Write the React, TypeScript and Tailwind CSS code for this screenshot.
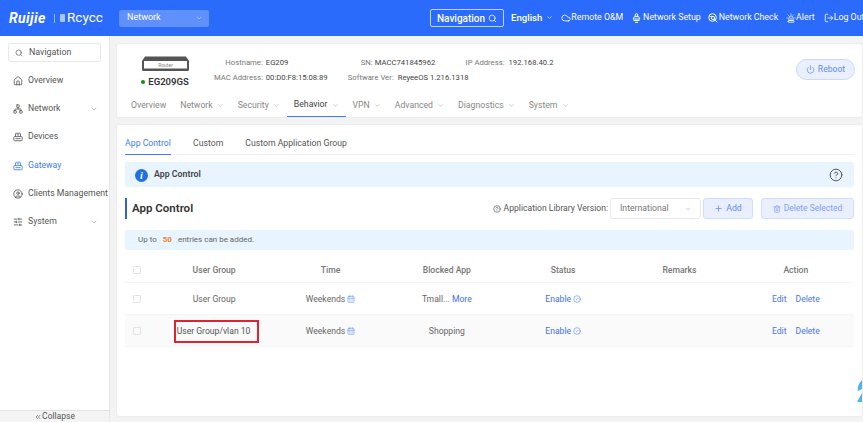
import { ChevronDown, ChevronsLeft, Search, Home, Network, CircleUser, SlidersHorizontal, Cloud, Power, Plus, Trash2, CalendarDays, CircleCheck, CircleHelp, LogOut, Siren } from 'lucide-react';

const font = "font-['Roboto','Liberation_Sans',sans-serif]";

function DeviceIcon({ size = 10, className = '' }: { size?: number; className?: string }) {
  return (
    <svg width={size} height={size} viewBox="0 0 12 12" fill="none" stroke="currentColor" strokeWidth="1" className={className}>
      <path d="M3 5.5V2.5a1 1 0 0 1 1-1h4a1 1 0 0 1 1 1v3" />
      <rect x="1" y="5.5" width="10" height="5" rx="1" />
      <path d="M3 8h6M4.5 3.5h3" />
    </svg>
  );
}

function SetupIcon() {
  return (
    <svg width="9" height="10" viewBox="0 0 9 10" fill="none" stroke="currentColor" strokeWidth="1" className="ml-[9px] mr-[2px] shrink-0">
      <circle cx="4.5" cy="2" r="1.3" />
      <path d="M2.5 3.6h4L8 6H1zM1.5 7.5h6M3 9.3h3" />
    </svg>
  );
}

function CheckIcon() {
  return (
    <svg width="10" height="10" viewBox="0 0 10 10" fill="none" stroke="currentColor" strokeWidth="1" className="ml-[7px] mr-px shrink-0">
      <circle cx="4.5" cy="4.5" r="3.8" />
      <circle cx="5" cy="5" r="1.6" />
      <path d="M6.2 6.2L9.3 9.3M1.5 4c1-.8 2-.8 3-.2" />
    </svg>
  );
}

const sideItems = [
  { label: 'Overview', icon: Home, y: 'h-[28px]' },
  { label: 'Network', icon: Network, arrow: true, y: 'h-[28px]' },
  { label: 'Devices', icon: DeviceIcon, y: 'h-[28px]' },
  { label: 'Gateway', icon: DeviceIcon, active: true, y: 'h-[29px]' },
  { label: 'Clients Management', icon: CircleUser, y: 'h-[28px]' },
  { label: 'System', icon: SlidersHorizontal, arrow: true, y: 'h-[28px]' },
];

const rows = [
  { group: 'User Group', app: 'Tmall...', more: true, bg: 'bg-white' },
  { group: 'User Group/vlan 10', app: 'Shopping', boxed: true, bg: 'bg-[#fafafa]' },
];

function Sidebar() {
  return (
    <aside className="w-[110px] shrink-0 flex flex-col bg-white border-r border-[#e6e6e6]">
      <div className="mx-2 mt-[7px] mb-[5px] h-[19px] flex items-center gap-[6px] px-[6px] border border-[#e8e8e8] rounded-[3px] text-[#555] text-[8.9px]">
        <Search size={8} />
        Navigation
      </div>
      {sideItems.map((it) => (
        <div key={it.label} className={`${it.y} flex items-center pl-[13px] pr-[11px] gap-[5px] text-[8.7px] whitespace-nowrap ${it.active ? 'text-[#3f7cf6]' : 'text-[#555]'}`}>
          <it.icon size={10} className="shrink-0" />
          <span className="flex-1">{it.label}</span>
          {it.arrow && <ChevronDown size={8} className="text-[#aaa]" />}
        </div>
      ))}
      <div className="mt-auto h-[12px] bg-[#f4f4f4] border-t border-[#e3e3e3] flex items-center justify-center text-[8.5px] text-[#555] leading-none">
        <ChevronsLeft size={8} />
        Collapse
      </div>
    </aside>
  );
}

function Header() {
  return (
    <header className="h-[36px] shrink-0 bg-[#2b6bfb] flex items-center text-white overflow-hidden">
      <div className="w-[119px] shrink-0 flex items-center pl-[9px] whitespace-nowrap">
        <span className="w-[41px] italic font-bold text-[14px] tracking-[0.4px] leading-none">Ruijie</span>
        <span className="mx-[4px] w-px h-[9px] bg-white/50" />
        <span className="ml-[1px] w-[5px] h-[8px] bg-white/60 rounded-[1px] mr-[2px]" />
        <span className="text-[13.5px] leading-none">Rcycc</span>
      </div>
      <div className="w-[90px] shrink-0 h-[17px] rounded-[2px] bg-white/25 flex items-center justify-between pl-[8px] pr-[6px] text-[9px]">
        Network
        <ChevronDown size={8} className="text-white/60" />
      </div>
      <div className="ml-[221px] w-[74px] shrink-0 h-[18px] border border-white/70 rounded-[2px] flex items-center justify-between px-[6px] text-[10px] font-medium">
        Navigation
        <Search size={9} />
      </div>
      <div className="ml-[7px] shrink-0 flex items-center text-[9.6px] font-medium">
        English
        <ChevronDown size={7} className="ml-[4px]" />
      </div>
      <div className="ml-[8px] flex items-center text-[8.8px] whitespace-nowrap">
        <Cloud size={10} className="shrink-0" />
        Remote O&amp;M
        <SetupIcon />
        Network Setup
        <CheckIcon />
        Network Check
        <Siren size={10} className="ml-[8px] shrink-0" />
        Alert
        <LogOut size={10} className="ml-[9px] shrink-0" />
        Log Out
      </div>
    </header>
  );
}

function DeviceCard() {
  const tabs = [
    { label: 'Overview', w: 'ml-[14px]' },
    { label: 'Network', w: 'ml-[14px]', arrow: true },
    { label: 'Security', w: 'ml-[14px]', arrow: true },
    { label: 'Behavior', w: 'ml-[7px] px-[7px] border-b border-[#3f7cf6] text-[#444]', arrow: true },
    { label: 'VPN', w: 'ml-[7px]', arrow: true },
    { label: 'Advanced', w: 'ml-[14px]', arrow: true },
    { label: 'Diagnostics', w: 'ml-[14px]', arrow: true },
    { label: 'System', w: 'ml-[14px]', arrow: true },
  ];
  return (
    <section className="h-[75px] bg-white rounded-[3px] border border-[#ececec] flex flex-col">
      <div className="h-[50px] flex items-start">
        <div className="ml-[24px] mt-[12px] w-[48px] flex flex-col items-center">
          <svg width="47" height="15" viewBox="0 0 47 15">
            <path d="M3 0.5H44L47 5V13.5a1.5 1.5 0 0 1-1.5 1.5H1.5A1.5 1.5 0 0 1 0 13.5V5Z" fill="#555" />
            <rect x="2" y="5" width="43" height="7.5" fill="#fff" />
            <text x="23.5" y="11" textAnchor="middle" fontSize="5" fill="#888">Router</text>
          </svg>
          <div className="mt-[4px] flex items-center gap-[3px] text-[9.5px] font-semibold text-[#333] whitespace-nowrap">
            <span className="w-[4px] h-[4px] rounded-full bg-[#178a17]" />
            EG209GS
          </div>
        </div>
        <div className="ml-[25px] mt-[13px] flex flex-col gap-[4px] text-[7.7px] leading-[11px] whitespace-nowrap items-end">
          <div className="flex gap-[3px]"><span className="text-[#777]">Hostname:</span><span className="w-[61px] text-[#444]">EG209</span></div>
          <div className="flex gap-[3px]"><span className="text-[#777]">MAC Address:</span><span className="w-[61px] text-[#444]">00:D0:F8:15:08:89</span></div>
        </div>
        <div className="ml-[21px] mt-[13px] flex flex-col gap-[4px] text-[7.7px] leading-[11px] whitespace-nowrap">
          <div className="ml-[13px] flex gap-[2px]"><span className="text-[#777]">SN:</span><span className="text-[#444]">MACC741845962</span></div>
          <div className="flex gap-[4px]"><span className="text-[#777]">Software Ver:</span><span className="text-[#444]">ReyeeOS 1.216.1318</span></div>
        </div>
        <div className="ml-[-3px] mt-[13px] flex gap-[4px] text-[7.7px] leading-[11px] whitespace-nowrap">
          <span className="text-[#777]">IP Address:</span><span className="text-[#444]">192.168.40.2</span>
        </div>
        <button className="ml-auto mr-[7px] mt-[15px] w-[59px] h-[21px] rounded-full border border-[#c9d8fc] bg-[#eaf0fe] text-[#5f8bf5] text-[8.6px] flex items-center justify-center gap-[3px]">
          <Power size={9} />
          Reboot
        </button>
      </div>
      <nav className="flex-1 flex items-stretch text-[8.7px] text-[#888] whitespace-nowrap">
        {tabs.map((t) => (
          <div key={t.label} className={`${t.w} flex items-center gap-[4px]`}>
            {t.label}
            {t.arrow && <ChevronDown size={7} className="text-[#aaa]" />}
          </div>
        ))}
      </nav>
    </section>
  );
}

function RuleTable() {
  return (
    <div className="text-[8.6px] text-[#666]">
      <div className="h-[25px] grid grid-cols-[31px_repeat(6,1fr)] items-center text-center font-medium text-[#777] border-b border-[#f5f5f5]">
        <span className="w-[8px] h-[8px] ml-[8px] border border-[#e3e3e3] rounded-[1px]" />
        <span>User Group</span>
        <span>Time</span>
        <span>Blocked App</span>
        <span>Status</span>
        <span>Remarks</span>
        <span>Action</span>
      </div>
      {rows.map((r) => (
        <div key={r.group} className={`h-[32px] pt-[1px] grid grid-cols-[31px_repeat(6,1fr)] items-center text-center ${r.bg} border-b border-[#f3f6fb]`}>
          <span className="w-[8px] h-[8px] ml-[8px] border border-[#e3e3e3] rounded-[1px]" />
          <span className="flex justify-center">
            {r.boxed ? <span className="ml-[4px] h-[23px] w-[85px] pl-[1px] flex items-center border-2 border-[#e0242f] whitespace-nowrap text-[#555]">{r.group}</span> : r.group}
          </span>
          <span className="flex items-center justify-center gap-[2px]">
            Weekends
            <CalendarDays size={8} className="text-[#6f9df5]" />
          </span>
          <span>
            {r.app}
            {r.more && <span className="text-[#3f6ff5]"> More</span>}
          </span>
          <span className="flex items-center justify-center gap-[2px] text-[#3f6ff5]">
            Enable
            <CircleCheck size={8} strokeWidth={1.5} />
          </span>
          <span />
          <span className="text-[#4a74f5] flex justify-center gap-[9px]">
            <span>Edit</span>
            <span>Delete</span>
          </span>
        </div>
      ))}
    </div>
  );
}

function AppControlCard() {
  return (
    <section className="mt-[6px] mb-[5px] flex-1 bg-white rounded-[3px] border border-[#ececec] px-[8px] relative overflow-hidden">
      <div className="h-[30px] pt-[8px] flex border-b border-[#f0f0f0] text-[8.7px] text-[#555] whitespace-nowrap">
        <div className="w-[46px] flex items-center justify-center text-[#3f7cf6] border-b border-[#3f7cf6] -mb-px">App Control</div>
        <div className="ml-[22px] flex items-center">Custom</div>
        <div className="ml-[22px] flex items-center">Custom Application Group</div>
      </div>
      <div className="mt-[7px] h-[25px] pt-[1px] bg-[#e8f4ff] rounded-[2px] flex items-center pl-[10px] pr-[11px] text-[8.8px] font-semibold text-[#444]">
        <span className="w-[13px] h-[13px] rounded-full bg-[#1f6fe8] text-white text-[10px] italic font-bold flex items-center justify-center mr-[6px] font-['Liberation_Serif',serif]">i</span>
        App Control
        <CircleHelp size={14} strokeWidth={1.5} className="ml-auto text-[#444]" />
      </div>
      <div className="mt-[11px] h-[21px] flex items-center">
        <div className="h-[21px] border-l-[2px] border-[#2f62d8] pl-[5px] flex items-center text-[11.5px] font-semibold text-[#333]">App Control</div>
        <CircleHelp size={8} className="ml-auto text-[#555]" />
        <span className="ml-[3px] text-[8.6px] text-[#555] whitespace-nowrap">Application Library Version:</span>
        <div className="ml-[2px] w-[91px] h-[21px] border border-[#e8e8e8] rounded-[3px] flex items-center justify-between pl-[9px] pr-[8px] text-[8.7px] text-[#777]">
          International
          <ChevronDown size={8} className="text-[#bbb]" />
        </div>
        <button className="ml-[2px] w-[50px] h-[21px] rounded-[3px] border border-[#cfdcfb] bg-[#e9effd] text-[#5f8bf5] text-[8.7px] flex items-center justify-center gap-[3px]">
          <Plus size={9} />
          Add
        </button>
        <button className="ml-[8px] w-[93px] h-[21px] rounded-[3px] border border-[#cfdcfb] bg-[#e9effd] text-[#7f9ff5] text-[8.5px] flex items-center justify-center gap-[3px] whitespace-nowrap">
          <Trash2 size={8} />
          Delete Selected
        </button>
      </div>
      <div className="mt-[11px] mb-[8px] h-[20px] bg-[#e8f4ff] rounded-[2px] flex items-center pl-[13px] text-[8px] text-[#666] whitespace-pre">
        Up to <span className="mx-[4px] font-bold text-[#f5822a]">50</span> entries can be added.
      </div>
      <RuleTable />
      <svg className="absolute right-0 top-[255px]" width="5" height="23" viewBox="0 0 5 23">
        <path d="M5 0 C2 3 0 7 1 11 L5 9 Z M5 13 L0 22 L5 22 Z" fill="#4fb4ee" />
      </svg>
    </section>
  );
}

export default function App() {
  return (
    <div className={`${font} w-[863px] h-[422px] flex flex-col overflow-hidden bg-[#f3f3f3]`}>
      <Header />
      <div className="flex-1 flex min-h-0">
        <Sidebar />
        <main className="flex-1 min-w-0 pt-[7px] pl-[6px] flex flex-col">
          <DeviceCard />
          <AppControlCard />
        </main>
      </div>
    </div>
  );
}
